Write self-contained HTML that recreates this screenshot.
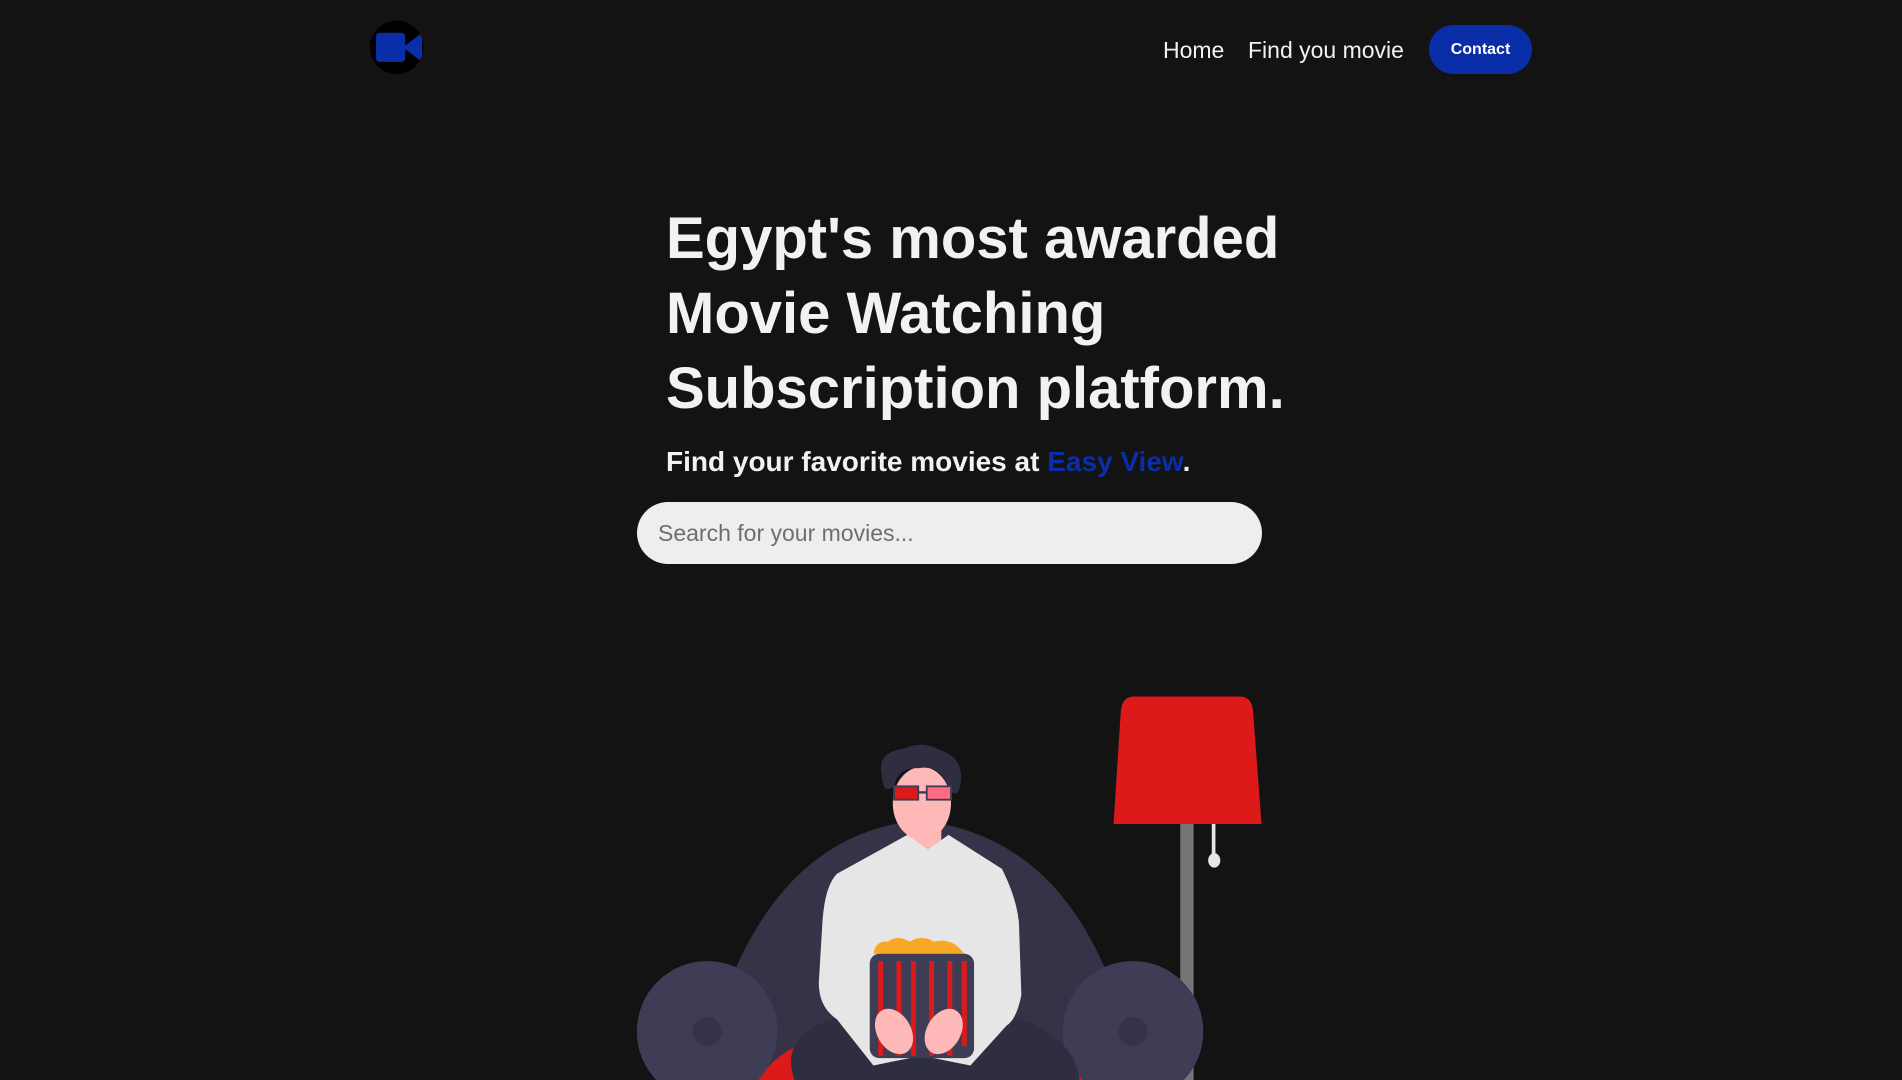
<!DOCTYPE html>
<html><head><meta charset="utf-8"><style>
html,body{margin:0;padding:0;width:1902px;height:1080px;overflow:hidden;background:#131313;font-family:"Liberation Sans",Arial,sans-serif;color:#f2f2f2;position:relative}
.abs{position:absolute}
.nav{font-size:23px;top:37px;white-space:nowrap}
.btn{left:1429px;top:25px;width:103px;height:49px;border-radius:25px;background:#0a2ea8;color:#fff;font-weight:bold;font-size:16px;text-align:center;line-height:49px}
h1{position:absolute;left:666px;top:201px;margin:0;font-size:58px;line-height:75px;font-weight:bold;color:#f2f2f2;white-space:nowrap}
.sub{left:666px;top:446px;font-size:28px;font-weight:bold;white-space:nowrap}
.sub span{color:#0a2ea8}
.search{left:637px;top:502px;width:625px;height:62px;border-radius:31px;background:#eeeeee;color:#6e6e6e;font-size:23px;line-height:62px;box-sizing:border-box;padding-left:21px}
svg{position:absolute;left:0;top:0}
</style></head><body>
<svg width="1902" height="1080" viewBox="0 0 1568 890" preserveAspectRatio="none">
  <defs><clipPath id="lc"><circle cx="327" cy="39" r="22"/></clipPath></defs>
  <circle cx="327" cy="39" r="22" fill="#000"/>
  <g clip-path="url(#lc)">
  <rect x="310" y="27" width="24" height="24" rx="3" fill="#0a2ea8"/>
  <polygon points="332,39 348,27 348,51" fill="#0a2ea8"/>
  </g>
  <rect x="973" y="678" width="11" height="212" fill="#757575"/>
  <rect x="999" y="678" width="3" height="30" fill="#e6e6e6"/>
  <ellipse cx="1001" cy="709" rx="5" ry="6" fill="#e6e6e6"/>
  <path d="M928 574 H1022 Q1032 574 1033 586 L1040 679 H918 L924 586 Q925 574 935 574 Z" fill="#dc1a1a"/>
  <path d="M578 890 Q620 690 757 676 Q900 690 938 890 Z" fill="#363348"/>
  <path d="M625 890 Q650 850 720 850 L800 850 Q880 850 905 890 Z" fill="#dc1a1a"/>
  <ellipse cx="583" cy="850" rx="58" ry="58" fill="#3f3d56"/>
  <circle cx="583" cy="850" r="12" fill="#353349"/>
  <ellipse cx="934" cy="850" rx="58" ry="58" fill="#3f3d56"/>
  <circle cx="934" cy="850" r="12" fill="#353349"/>
  <path d="M655 890 Q640 850 700 835 L760 845 L825 835 Q885 850 890 890 Z" fill="#2f2e41"/>
  <rect x="748" y="670" width="28" height="30" fill="#ffb8b8"/>
  <ellipse cx="760" cy="662" rx="24" ry="30" fill="#ffb8b8"/>
  <path d="M727 640 Q722 620 745 617 Q760 610 775 618 Q795 625 792 645 Q790 660 782 650 Q775 630 758 633 Q740 632 737 648 Q728 655 727 640 Z" fill="#2f2e41"/>
  <rect x="737" y="648" width="20" height="11" fill="#dc1a1a" stroke="#3f3d56" stroke-width="1.5"/>
  <rect x="764" y="648" width="20" height="11" fill="#ff6b81" stroke="#3f3d56" stroke-width="1.5"/>
  <rect x="757" y="652" width="7" height="2" fill="#3f3d56"/>
  <path d="M748 688 L765 700 L782 688 L826 716 Q838 740 840 760 L842 820 Q838 840 830 845 L800 878 L760 870 L720 878 L690 840 Q675 830 675 810 L678 760 Q680 730 690 720 Z" fill="#e6e6e6"/>
  <path d="M720 786 Q722 775 732 776 Q740 770 750 776 Q760 770 770 776 Q785 772 795 786 Z" fill="#f9a826"/>
  <rect x="717" y="786" width="86" height="86" rx="8" fill="#3f3d56"/>
  <g fill="#dc1a1a">
    <rect x="724" y="792" width="4" height="78"/><rect x="739" y="792" width="4" height="78"/>
    <rect x="751" y="792" width="4" height="78"/><rect x="766" y="792" width="4" height="78"/>
    <rect x="781" y="792" width="4" height="78"/><rect x="793" y="792" width="4" height="70"/>
  </g>
  <ellipse cx="737" cy="850" rx="14" ry="20" fill="#ffb8b8" transform="rotate(-30 737 850)"/>
  <ellipse cx="778" cy="850" rx="14" ry="20" fill="#ffb8b8" transform="rotate(30 778 850)"/>
</svg>
<div class="abs nav" style="left:1163px">Home</div>
<div class="abs nav" style="left:1248px">Find you movie</div>
<div class="abs btn">Contact</div>
<h1>Egypt's most awarded<br>Movie Watching<br>Subscription platform.</h1>
<div class="abs sub">Find your favorite movies at <span>Easy View</span>.</div>
<div class="abs search">Search for your movies...</div>
</body></html>
